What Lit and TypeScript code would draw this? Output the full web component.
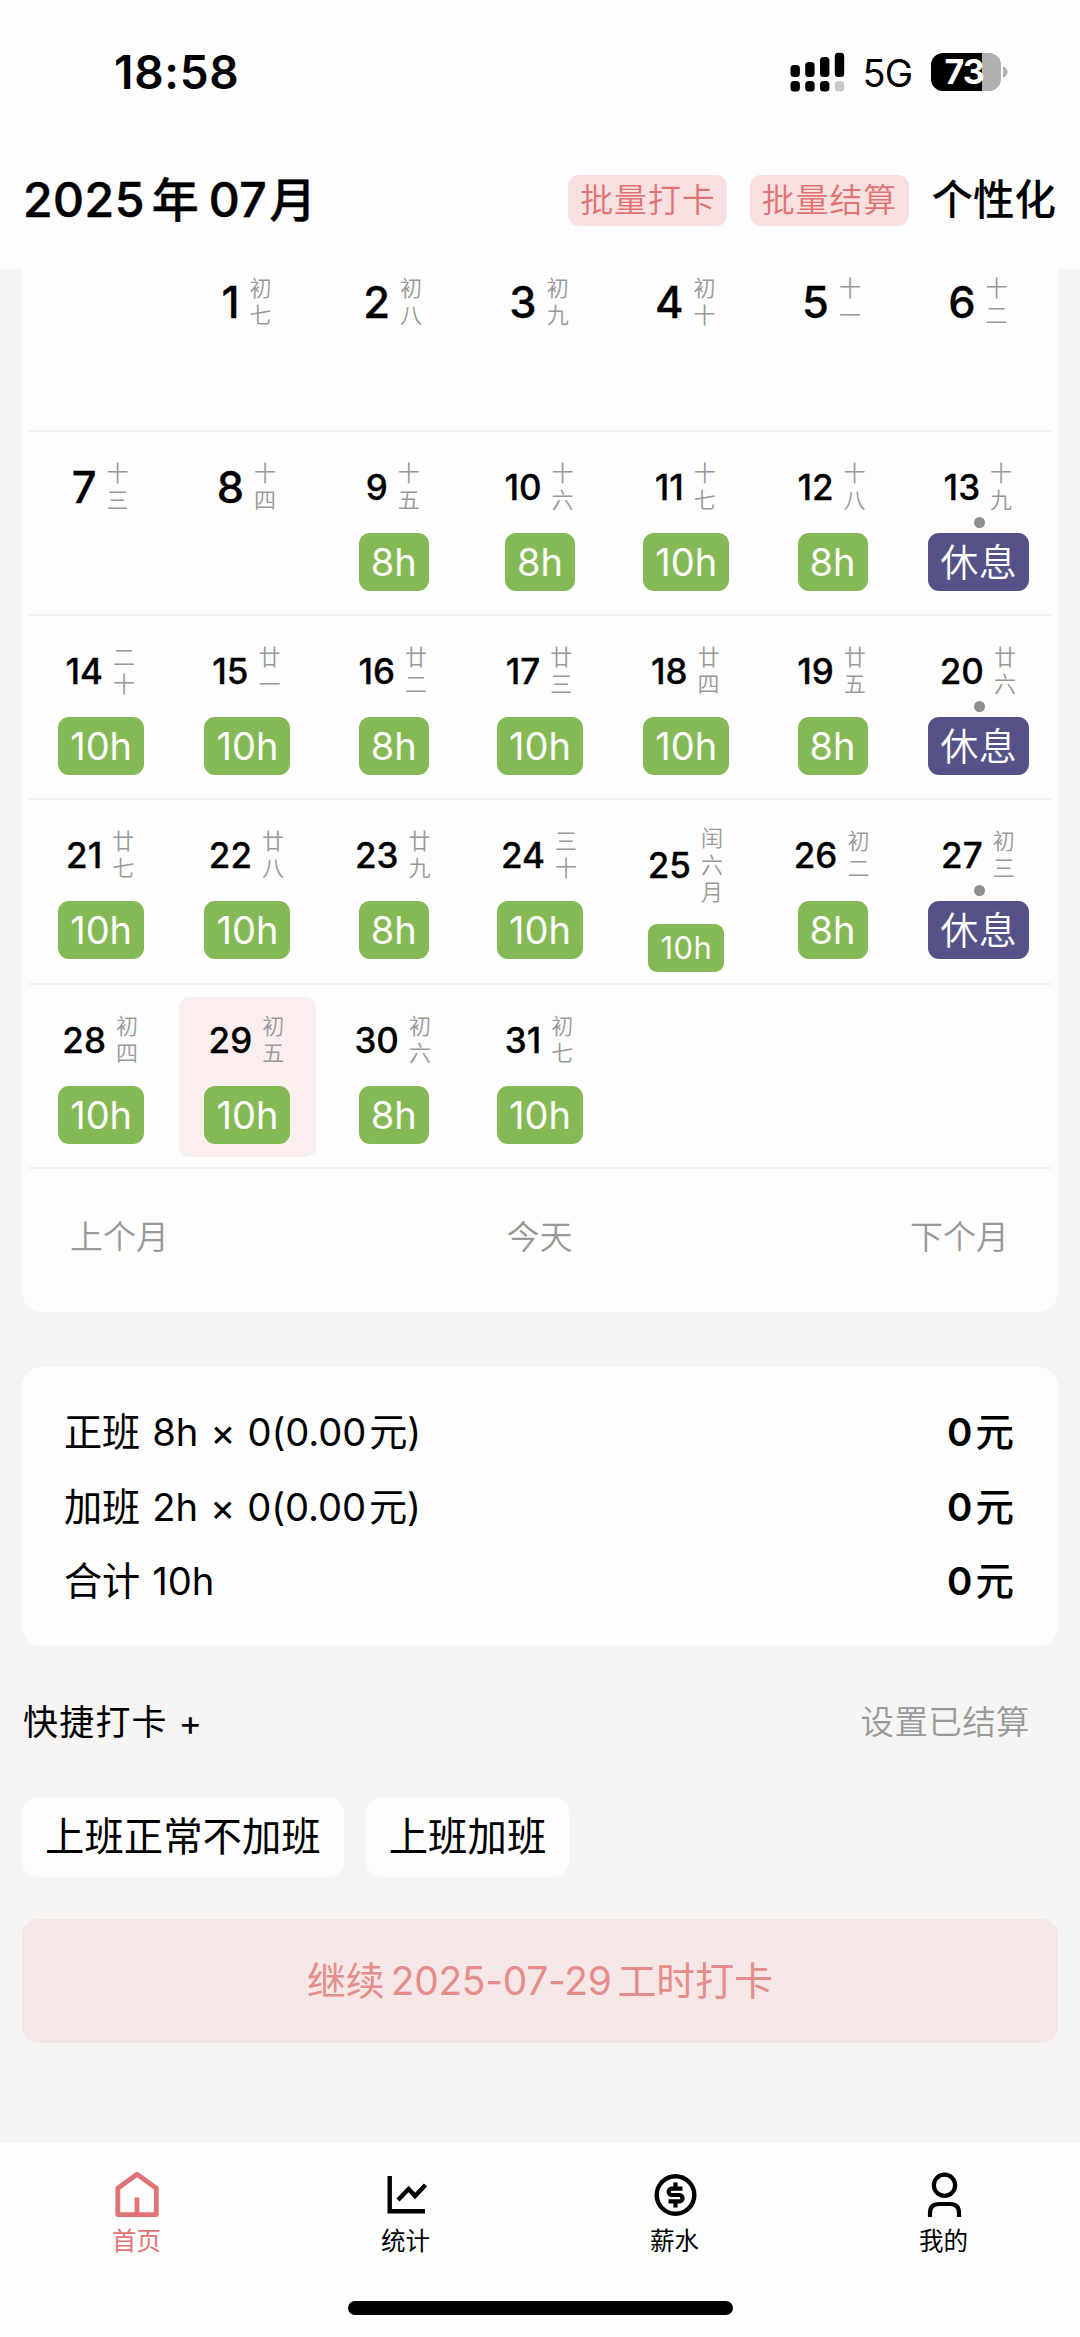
import { LitElement, html, svg, css, nothing } from "lit";
import { customElement, property } from "lit/decorators.js";
import { classMap } from "lit/directives/class-map.js";

interface Day {
  n: number;
  lunar: string;
  mark?: string;
}

const d = (n: number, lunar: string, mark?: string): Day => ({ n, lunar, mark });

const WEEKS: (Day | null)[][] = [
  [null, d(1, "初七"), d(2, "初八"), d(3, "初九"), d(4, "初十"), d(5, "十一"), d(6, "十二")],
  [d(7, "十三"), d(8, "十四"), d(9, "十五", "8h"), d(10, "十六", "8h"), d(11, "十七", "10h"), d(12, "十八", "8h"), d(13, "十九", "休息")],
  [d(14, "二十", "10h"), d(15, "廿一", "10h"), d(16, "廿二", "8h"), d(17, "廿三", "10h"), d(18, "廿四", "10h"), d(19, "廿五", "8h"), d(20, "廿六", "休息")],
  [d(21, "廿七", "10h"), d(22, "廿八", "10h"), d(23, "廿九", "8h"), d(24, "三十", "10h"), d(25, "闰六月", "10h"), d(26, "初二", "8h"), d(27, "初三", "休息")],
  [d(28, "初四", "10h"), d(29, "初五", "10h"), d(30, "初六", "8h"), d(31, "初七", "10h"), null, null, null],
];

@customElement("status-bar")
class StatusBar extends LitElement {
  static styles = css`
    :host {
      display: flex;
      align-items: center;
      justify-content: space-between;
      height: 144px;
      padding: 0 72px 0 114px;
      color: #000;
    }
    .time { font-size: 46px; font-weight: 600; line-height: 56px; letter-spacing: 0.7px; }
    .right { display: flex; align-items: center; }
    .net { font-size: 38px; font-weight: 400; line-height: 46px; margin: 1px 19px 0 18px; letter-spacing: -1px; }
    .battery { display: flex; align-items: center; gap: 2px; }
    .cell {
      display: flex;
      align-items: center;
      justify-content: center;
      box-sizing: border-box;
      width: 70px;
      height: 38px;
      padding-right: 4px;
      border-radius: 12px;
      background: linear-gradient(to right, #000 0 51px, #b0b0b0 51px);
      color: #fff;
      font-size: 34px;
      font-weight: 700;
      letter-spacing: -1px;
      line-height: 38px;
    }
    svg { display: block; }
  `;
  render() {
    return html`
      <span class="time">18:58</span>
      <div class="right">
        <svg width="55" height="40" viewBox="0 0 55 40">
          <rect x="0.5" y="13" width="9.4" height="12" rx="3.5" />
          <rect x="15.2" y="10" width="9.4" height="15" rx="3.5" />
          <rect x="30" y="5" width="9.4" height="20" rx="3.5" />
          <rect x="44.8" y="0.8" width="9.4" height="24.2" rx="3.5" />
          <rect x="0.5" y="29" width="9.4" height="10.5" rx="3.5" />
          <rect x="15.2" y="29" width="9.4" height="10.5" rx="3.5" />
          <rect x="30" y="29" width="9.4" height="10.5" rx="3.5" />
          <rect x="44.8" y="29" width="9.4" height="10.5" rx="3.5" fill="#c9c9c9" />
        </svg>
        <span class="net">5G</span>
        <div class="battery">
          <span class="cell">73</span>
          <svg width="5" height="12" viewBox="0 0 5 12"><path d="M0 0.5C6 2 6 10 0 11.5Z" fill="#b0b0b0" /></svg>
        </div>
      </div>
    `;
  }
}

@customElement("day-cell")
class DayCell extends LitElement {
  @property({ attribute: false }) day: Day | null = null;
  @property({ type: Boolean }) selected = false;

  static styles = css`
    :host { display: flex; padding: 12px 5px 10px; box-sizing: border-box; min-width: 0; }
    .cell {
      position: relative;
      flex: 1;
      display: flex;
      flex-direction: column;
      align-items: center;
      justify-content: flex-start;
      padding-top: 16px;
      border-radius: 10px;
    }
    .selected { background: #faefee; }
    .date { display: flex; align-items: center; justify-content: center; gap: 10px; height: 54px; padding-right: 2px; }
    .num { color: #000; font-size: 35px; font-weight: 500; line-height: 42px; -webkit-text-stroke: 0.3px #000; }
    .plain .num { font-size: 43.5px; }
    .lunar {
      display: flex;
      flex-direction: column;
      width: 22px;
      font-size: 22px;
      line-height: 27px;
      color: #999;
      font-weight: 350;
      text-align: center;
    }
    .mark {
      margin-top: 19px;
      height: 58px;
      line-height: 58px;
      border-radius: 11px;
      padding: 0 12px;
      background: #85b955;
      color: #fff;
      font-size: 38px;
    }
    .rest { background: #555289; letter-spacing: 0.6px; font-weight: 350; }
    .tall { padding-top: 13px; }
    .tall .date { height: 80px; }
    .tall .mark {
      margin-top: 19px;
      height: 48px;
      line-height: 48px;
      font-size: 31px;
      border-radius: 9px;
      letter-spacing: 0.4px;
    }
    .dot {
      position: absolute;
      left: 50%;
      top: 73px;
      width: 11px;
      height: 11px;
      margin-left: -5px;
      border-radius: 50%;
      background: #8f8f8f;
    }
  `;
  render() {
    const day = this.day;
    if (!day) return nothing;
    const rest = day.mark === "休息";
    return html`
      <div class=${classMap({ cell: true, selected: this.selected, plain: !day.mark, tall: day.lunar.length > 2 })}>
        <div class="date">
          <span class="num">${day.n}</span>
          <span class="lunar">${[...day.lunar].map((c) => html`<span>${c}</span>`)}</span>
        </div>
        ${rest ? html`<i class="dot"></i>` : nothing}
        ${day.mark ? html`<span class=${classMap({ mark: true, rest })}>${day.mark}</span>` : nothing}
      </div>
    `;
  }
}

const ICONS = {
  home: svg`<path d="M4.8 18.3L24 4.2L43.3 18.3V44.6H4.8Z M24 44V27.5" fill="none" stroke="currentColor" stroke-width="4.8" stroke-linejoin="round" stroke-linecap="butt"/>`,
  chart: svg`<path d="M7.7 6V41.3H43 M16 30L26.7 19L33 26L43.5 15" fill="none" stroke="currentColor" stroke-width="4.4"/>`,
  money: svg`<circle cx="24.5" cy="25" r="18.8" fill="none" stroke="currentColor" stroke-width="4.4"/>
    <path d="M31.5 18.7H20.5C16.8 18.7 16.8 25 20.5 25H28.5C32.5 25 32.5 31.4 28.5 31.4H17.5 M24.5 12.5V19 M24.5 31V37.5" fill="none" stroke="currentColor" stroke-width="4.2"/>`,
  person: svg`<circle cx="24.5" cy="15.3" r="10.6" fill="none" stroke="currentColor" stroke-width="4.2"/>
    <path d="M10 47V43Q10 34 19 34H30Q39 34 39 43V47" fill="none" stroke="currentColor" stroke-width="4.2"/>`,
};

@customElement("tab-bar")
class TabBar extends LitElement {
  static styles = css`
    :host {
      display: flex;
      flex-direction: column;
      align-items: center;
      height: 194px;
      background: #fdfdfd;
    }
    .tabs { display: grid; grid-template-columns: repeat(4, 269px); padding-top: 27px; height: 131px; }
    .tab { display: flex; flex-direction: column; align-items: center; color: #000; }
    .active { color: #e07474; }
    .label { font-size: 24.5px; line-height: 34px; margin-top: 5.5px; }
    .indicator { width: 385px; height: 14px; border-radius: 7px; background: #000; }
    svg { display: block; }
  `;
  render() {
    const tabs = [
      { label: "首页", icon: ICONS.home },
      { label: "统计", icon: ICONS.chart },
      { label: "薪水", icon: ICONS.money },
      { label: "我的", icon: ICONS.person },
    ];
    return html`
      <div class="tabs">
        ${tabs.map(
          (t, i) => html`<div class=${classMap({ tab: true, active: i === 0 })}>
            <svg width="48" height="48" viewBox="0 0 48 48">${t.icon}</svg>
            <span class="label">${t.label}</span>
          </div>`
        )}
      </div>
      <div class="indicator"></div>
    `;
  }
}

@customElement("app-root")
class AppRoot extends LitElement {
  static styles = css`
    :host {
      display: flex;
      flex-direction: column;
      width: 1080px;
      height: 2337px;
      overflow: hidden;
      background: #f6f5f3;
      color: #000;
      font-family: Inter, "Noto Sans CJK SC", sans-serif;
      white-space: nowrap;
    }
    .top { flex: none; height: 269px; background: #fdfdfd; }
    .header { display: flex; align-items: center; height: 112px; padding: 0 24px 0 23px; }
    .title { display: flex; flex: 1; font-size: 48px; font-weight: 500; line-height: 60px; }
    .title .y { margin: 0 10px 0 7px; font-size: 47px; -webkit-text-stroke: 0.4px #000; }
    .title .m { margin-left: 2px; font-size: 47px; -webkit-text-stroke: 0.4px #000; }
    .title .d { letter-spacing: 0.5px; -webkit-text-stroke: 0.6px #000; }
    .batch {
      height: 51px;
      line-height: 51px;
      border-radius: 11px;
      background: #f8e0e0;
      color: #e07474;
      font-size: 33px;
      letter-spacing: 0.9px;
      width: 159px;
      text-align: center;
      margin-right: 22.5px;
      font-weight: 350;
    }
    .custom { font-size: 41.5px; font-weight: 500; line-height: 56px; }
    .card { background: #fdfdfd; margin: 0 22px; border-radius: 20px; }
    .calendar { flex: none; height: 1043px; border-radius: 0 0 20px 20px; overflow: hidden; }
    .weeks { margin: -21.7px 6px 0; }
    .week {
      display: grid;
      grid-template-columns: repeat(7, 1fr);
      height: 184.3px;
      box-sizing: border-box;
      border-bottom: 2px solid #f1f2f2;
    }
    .pager { display: flex; justify-content: space-between; padding: 45px 49px 0 48px; font-size: 33px; line-height: 46px; color: #999; font-weight: 350; }
    .summary { flex: none; margin-top: 55px; height: 279px; box-sizing: border-box; padding: 28px 44px 0 42px; }
    .line { display: flex; justify-content: space-between; height: 74.6px; line-height: 74px; font-size: 38.5px; }
    .calc { font-size: 38.2px; letter-spacing: -0.1px; word-spacing: 1.4px; }
    .amount { font-weight: 600; display: flex; gap: 3px; }
    .unit { font-weight: 500; }
    .cur { margin-left: 3px; }
    .quick { display: flex; justify-content: space-between; margin: 51px 50px 0 23px; line-height: 50px; font-size: 35px; letter-spacing: 1.2px; }
    .settle { color: #999; font-size: 33.5px; letter-spacing: 0.4px; font-weight: 350; }
    .chips { display: flex; gap: 22px; margin: 50px 22px 0; }
    .chip { height: 80px; line-height: 81px; padding: 0 23px; border-radius: 16px; background: #fdfdfd; font-size: 39.4px; }
    .go {
      box-sizing: border-box;
      margin: 42px 22px 0;
      height: 124px;
      padding-bottom: 1px;
      border-radius: 16px;
      background: #f5e7e6;
      color: #e58d8a;
      display: flex;
      align-items: center;
      justify-content: center;
      gap: 6px;
      font-size: 38.9px;
      line-height: 56px;
    }
    .go .date { letter-spacing: -0.3px; }
    .spacer { flex: 1; }
    tab-bar { flex: none; }
  `;
  render() {
    const line = (name: string, hours: string, calc: boolean) => html`
      <div class="line">
        <span class="calc">${name} ${hours}${calc ? html` × 0(0.00<span class="cur">元</span>)` : nothing}</span>
        <span class="amount"><span>0</span><span class="unit">元</span></span>
      </div>
    `;
    return html`
      <div class="top">
        <status-bar></status-bar>
        <div class="header">
          <div class="title">
            <span class="d">2025</span><span class="y">年</span><span class="d">07</span><span class="m">月</span>
          </div>
          <span class="batch">批量打卡</span>
          <span class="batch">批量结算</span>
          <span class="custom">个性化</span>
        </div>
      </div>
      <div class="card calendar">
        <div class="weeks">
          ${WEEKS.map(
            (w) => html`<div class="week">
              ${w.map((x) => html`<day-cell .day=${x} ?selected=${x?.n === 29}></day-cell>`)}
            </div>`
          )}
        </div>
        <div class="pager"><span>上个月</span><span>今天</span><span>下个月</span></div>
      </div>
      <div class="card summary">
        ${line("正班", "8h", true)} ${line("加班", "2h", true)} ${line("合计", "10h", false)}
      </div>
      <div class="quick"><span>快捷打卡 +</span><span class="settle">设置已结算</span></div>
      <div class="chips"><span class="chip">上班正常不加班</span><span class="chip">上班加班</span></div>
      <div class="go"><span>继续</span><span class="date">2025-07-29</span><span>工时打卡</span></div>
      <div class="spacer"></div>
      <tab-bar></tab-bar>
    `;
  }
}
